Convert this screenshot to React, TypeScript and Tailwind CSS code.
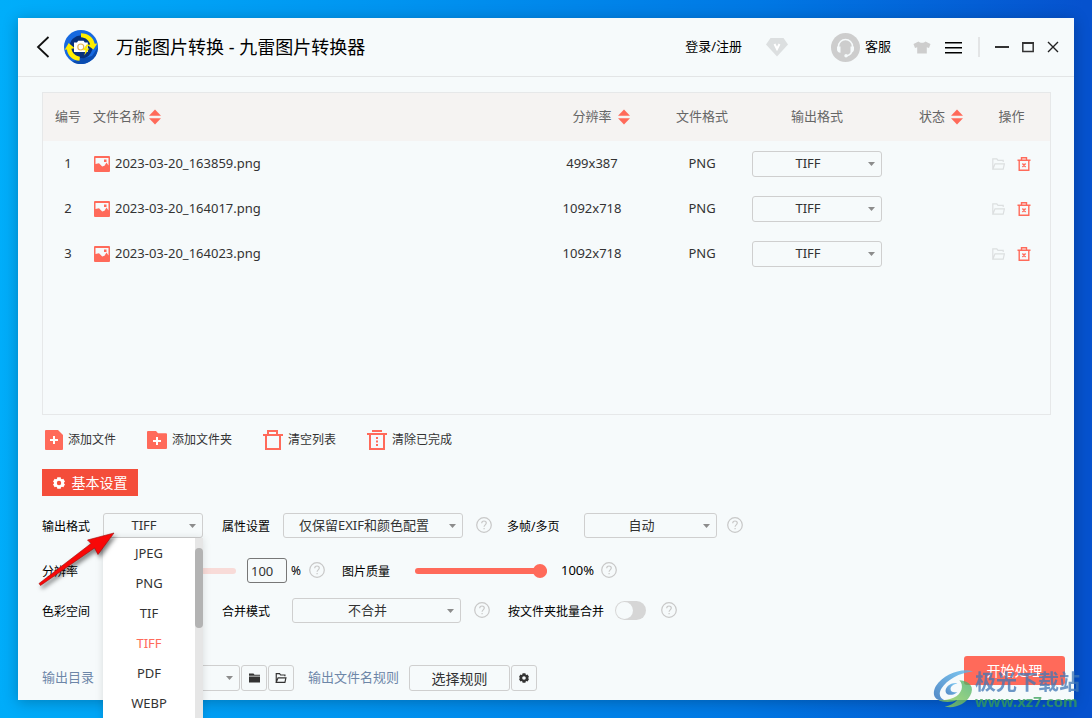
import React, { useState } from 'react';

const FORMATS = ['JPEG', 'PNG', 'TIF', 'TIFF', 'PDF', 'WEBP'];

const initialFiles = [
    { id: 1, name: '2023-03-20_163859.png', size: '499x387', type: 'PNG', target: 'TIFF' },
    { id: 2, name: '2023-03-20_164017.png', size: '1092x718', type: 'PNG', target: 'TIFF' },
    { id: 3, name: '2023-03-20_164023.png', size: '1092x718', type: 'PNG', target: 'TIFF' },
];

const Sorter = () => (
    <svg width="12" height="16" viewBox="0 0 12 16" fill="#ff6a5a" aria-hidden="true">
        <path d="M6 0.5 12 6.8H0z" />
        <path d="M6 15.5 0 9.2h12z" />
    </svg>
);

const Logo = () => (
    <svg width="34" height="34" viewBox="0 0 34 34" aria-hidden="true">
        <circle cx="17" cy="17" r="17" fill="#1769e0" />
        <path d="M34 17a17 17 0 0 1-26 14.4L28 26z" fill="#0b4cb0" />
        <circle cx="17" cy="17" r="11.5" fill="#07307c" />
        <path d="M17 3.2c7.300 0 12.600 4.500 13.700 10.600l2.600-.4-3.900 6.200-6.200-4.600 3-.5C25 10.500 21.700 7.600 17 7.300z" fill="#ffee00" />
        <path d="M15.500 30.800C8.600 30.500 3.600 25.800 2.900 19.600l-2.200.2 4-6.900 6 5.300-3.300.6c.8 4.200 4 7.300 8.500 7.900z" fill="#ffee00" />
        <path d="M10 12.500h3l1.200-1.700h5.400l1.200 1.700h3V22H10z" fill="#fff" />
        <circle cx="16.800" cy="17" r="3" fill="#fff" stroke="#e3b45b" strokeWidth="1.200" />
        <path d="m22.500 14.500-3.600 5.800h2.600l-1.200 5.200 5-7h-2.600l1.800-4z" fill="#ffee00" />
    </svg>
);

const ImageIcon = () => (
    <svg width="16" height="16" viewBox="0 0 16 16" aria-hidden="true">
        <rect width="16" height="16" rx="1" fill="#ff6a5a" />
        <path d="M1.500 2h13V9.500L12.500 6.500 10.500 9.800 8.200 10.500 5 7.200 1.500 8z" fill="#f6fafb" />
        <rect x="10" y="3.500" width="2.500" height="2.500" fill="#ff6a5a" />
    </svg>
);

const OpenFolder = () => (
    <svg width="13" height="12" viewBox="0 0 13 12" fill="none" stroke="currentColor" strokeWidth="1.200" aria-hidden="true">
        <path d="M11.200 4V2.400H6L4.800.8H.8v10.400M.8 11.200 3 5.800h9.400l-1.200 5.400z" />
    </svg>
);

const DeleteIcon = () => (
    <svg width="14" height="14" viewBox="0 0 14 14" fill="none" stroke="#ff6a5a" strokeWidth="1.400" aria-hidden="true">
        <path d="M.5 3.300h13M4.500 3V.8h5V3M2.200 3.500v9.800h9.600V3.500M5.400 6.500l3.200 3.400M8.600 6.500 5.400 9.900" />
    </svg>
);

const GearIcon = ({ size, hole }: { size: number; hole: string }) => (
    <svg width={size} height={size} viewBox="0 0 12 12" aria-hidden="true">
        <path
            d="M4.300.3h3.400l.3 1.400 1 .6 1.400-.5L12 4.700l-1 .9v.8l1 .9-1.600 2.900-1.400-.5-1 .6-.3 1.400H4.300L4 10.300l-1-.6-1.400.5L0 7.300l1-.9v-.8l-1-.9 1.600-2.900 1.400.5 1-.6z"
            fill="currentColor"
        />
        <circle cx="6" cy="6" r="2.200" fill={hole} />
    </svg>
);

const HelpIcon = () => (
    <button type="button" aria-label="帮助" className="mb-px shrink-0 text-[#c8c8c8]">
        <svg width="16" height="16" viewBox="0 0 16 16" fill="none" stroke="currentColor" strokeWidth="1.200">
            <circle cx="8" cy="8" r="7.300" />
            <path d="M5.700 6.300C5.700 4.800 6.700 4 8 4s2.300.9 2.300 2.100c0 1.700-2.200 1.800-2.200 3.600M8.100 11v1.200" />
        </svg>
    </button>
);

interface SelectBoxProps {
    id?: string;
    label?: string;
    value: string;
    options: string[];
    className: string;
    onChange?: (value: string) => void;
}

const SelectBox: React.FC<SelectBoxProps> = ({ id, label, value, options, className, onChange }) => (
    <div className={`relative shrink-0 ${className}`}>
        <select
            id={id}
            aria-label={label}
            value={value}
            onChange={e => onChange?.(e.target.value)}
            className="block h-full w-full appearance-none rounded-[3px] border border-[#cfcfcf] bg-transparent pr-[18px] text-center text-[13px] text-[#333]"
        >
            {options.map(option => <option key={option}>{option}</option>)}
        </select>
        <svg width="7" height="4" viewBox="0 0 7 4" fill="#8c8c8c" className="pointer-events-none absolute right-[7px] top-1/2 -translate-y-1/2">
            <path d="M0 0h7L3.500 4z" />
        </svg>
    </div>
);

const TitleBar = () => (
    <header className="flex h-[59px] shrink-0 items-center border-b border-[#e3e5e6] pl-[18px] pr-[15px]">
        <button type="button" aria-label="返回">
            <svg width="14" height="22" viewBox="0 0 14 22" fill="none" stroke="#111" strokeWidth="1.800">
                <path d="M12.500 1 2 11l10.500 10" />
            </svg>
        </button>
        <div className="ml-[14px]"><Logo /></div>
        <h1 className="ml-[18px] text-[18px] text-black">万能图片转换 - 九雷图片转换器</h1>

        <div className="ml-auto flex items-center text-[13px] text-black">
            <a href="#login">登录/注册</a>
            <svg width="22" height="20" viewBox="0 0 22 20" className="ml-6" aria-hidden="true">
                <path d="M4.500 1h13L22 7.500 11 19.500 0 7.500z" fill="#dcdfe0" />
                <path d="m8.500 7 2.500 5 2.500-5" fill="none" stroke="#fff" strokeWidth="2" />
            </svg>
            <button type="button" className="ml-[43px] flex items-center gap-[5px]">
                <svg width="29" height="29" viewBox="0 0 29 29" aria-hidden="true">
                    <circle cx="14.500" cy="14.500" r="14.500" fill="#cdcdcd" />
                    <path d="M7.500 15v-1.500a7 7 0 0 1 14 0V15c0 4-2.500 7-6 8" fill="none" stroke="#f6fafb" strokeWidth="1.500" />
                    <path d="M6 13.500h3.500v6.300C7.300 19.800 6 18.300 6 16.500zM23 13.500h-3.500v6.300c2.200 0 3.500-1.500 3.500-3.300z" fill="#f6fafb" />
                    <circle cx="15" cy="22.700" r="1.700" fill="#f6fafb" />
                </svg>
                客服
            </button>
            <button type="button" aria-label="换肤" className="ml-[22px]">
                <svg width="18" height="13" viewBox="0 0 18 13" fill="#cdcdcd">
                    <path d="M5.500.5C7 2.200 11 2.200 12.500.5L17.500 3 16 7l-2.200-.8V12.500H4.200V6.200L2 7 .5 3z" />
                </svg>
            </button>
            <button type="button" aria-label="菜单" className="ml-[14px]">
                <svg width="17" height="13" viewBox="0 0 17 13" fill="#000">
                    <path d="M0 1h17v1.500H0zM0 6h17v1.500H0zM0 11h17v1.500H0z" />
                </svg>
            </button>
            <span className="ml-4 h-5 w-0.5 bg-[#e3e5e6]" />
            <button type="button" aria-label="最小化" className="ml-[15px]">
                <svg width="14" height="12" viewBox="0 0 14 12"><path d="M0 5h14v2H0z" fill="#333" /></svg>
            </button>
            <button type="button" aria-label="最大化" className="ml-[13px]">
                <svg width="12" height="12" viewBox="0 0 12 12" fill="none" stroke="#333" strokeWidth="1.500">
                    <path d="M.8 2.200h10.400v8.300H.8z" />
                    <path d="M0 2h12" strokeWidth="2" />
                </svg>
            </button>
            <button type="button" aria-label="关闭" className="ml-[13px]">
                <svg width="12" height="12" viewBox="0 0 12 12" stroke="#222" strokeWidth="1.400"><path d="m1 1 10 10M11 1 1 11" /></svg>
            </button>
        </div>
    </header>
);

const FileTable = () => {
    const [files, setFiles] = useState(initialFiles);

    const changeTarget = (id: number, target: string) => {
        setFiles(files.map(f => (f.id === id ? { ...f, target } : f)));
    };

    return (
        <div className="min-h-0 flex-1 border border-[#e6e8e9]">
            <table className="w-full table-fixed text-center text-[13px] text-[#333]">
                <thead className="bg-[#f5f3f2] text-[#666]">
                    <tr className="h-12">
                        <th className="w-[50px] font-normal">编号</th>
                        <th className="text-left font-normal">
                            <span className="flex items-center gap-1">文件名称<Sorter /></span>
                        </th>
                        <th className="w-[110px] font-normal">
                            <span className="flex items-center justify-center">分辨率<span className="-mr-[18px] ml-1.5"><Sorter /></span></span>
                        </th>
                        <th className="w-[110px] font-normal">文件格式</th>
                        <th className="w-[120px] font-normal">输出格式</th>
                        <th className="w-[110px] font-normal">
                            <span className="flex items-center justify-center">状态<span className="-mr-[18px] ml-1.5"><Sorter /></span></span>
                        </th>
                        <th className="w-[63px] pr-[14px] font-normal">操作</th>
                    </tr>
                </thead>
                <tbody>
                    {files.map(file => (
                        <tr key={file.id} className="h-[45px]">
                            <td>{file.id}</td>
                            <td>
                                <span className="flex items-center gap-[5px] pl-px"><ImageIcon />{file.name}</span>
                            </td>
                            <td>{file.size}</td>
                            <td>{file.type}</td>
                            <td>
                                <SelectBox
                                    label={`${file.name} 输出格式`}
                                    value={file.target}
                                    options={FORMATS}
                                    onChange={value => changeTarget(file.id, value)}
                                    className="-mx-[5px] h-[26px]"
                                />
                            </td>
                            <td></td>
                            <td className="pr-[14px]">
                                <span className="flex items-center justify-center gap-3">
                                    <button type="button" aria-label="打开" className="text-[#dcdfe0]"><OpenFolder /></button>
                                    <button type="button" aria-label="删除" onClick={() => setFiles(files.filter(f => f.id !== file.id))}>
                                        <DeleteIcon />
                                    </button>
                                </span>
                            </td>
                        </tr>
                    ))}
                </tbody>
            </table>
        </div>
    );
};

const Toolbar = () => (
    <div className="flex shrink-0 items-center pl-[3px] text-[12px] text-[#333]">
        <button type="button" className="flex items-center gap-[5px]">
            <svg width="18" height="20" viewBox="0 0 18 20" aria-hidden="true">
                <path d="M1 0h12l5 5v14a1 1 0 0 1-1 1H1a1 1 0 0 1-1-1V1a1 1 0 0 1 1-1z" fill="#ff6a5a" />
                <path d="M9 6v8M5 10h8" stroke="#fff" strokeWidth="2" />
            </svg>
            添加文件
        </button>
        <button type="button" className="ml-[31px] flex items-center gap-[5px]">
            <svg width="20" height="20" viewBox="0 0 20 20" aria-hidden="true">
                <path d="M1 1h8l2 2.200h8a1 1 0 0 1 1 1V18a1 1 0 0 1-1 1H1a1 1 0 0 1-1-1V2a1 1 0 0 1 1-1z" fill="#ff6a5a" />
                <path d="M10 7v8M6 11h8" stroke="#fff" strokeWidth="2" />
            </svg>
            添加文件夹
        </button>
        <button type="button" className="ml-[31px] flex items-center gap-[5px]">
            <svg width="20" height="20" viewBox="0 0 20 20" fill="none" stroke="#ff6a5a" strokeWidth="2" aria-hidden="true">
                <path d="M0 5h20M5 4.500V1h9v3.500M3 5v14h14V5" />
            </svg>
            清空列表
        </button>
        <button type="button" className="ml-[31px] flex items-center gap-[5px]">
            <svg width="20" height="20" viewBox="0 0 20 20" fill="none" stroke="#ff6a5a" strokeWidth="2" aria-hidden="true">
                <path d="M0 4h20M5 1h10M3 4v15h14V4" />
                <path d="M10 7v9" strokeDasharray="2 1.500" />
            </svg>
            清除已完成
        </button>
    </div>
);

const FormatMenu = ({ value, onPick }: { value: string; onPick: (value: string) => void }) => (
    <div className="absolute left-0 top-full z-10 flex h-[190px] w-full overflow-hidden bg-white shadow-[0_0_8px_rgba(0,0,0,0.12)]">
        <ul className="flex-1 pt-px text-[13px]">
            {FORMATS.map(format => (
                <li key={format}>
                    <button
                        type="button"
                        onClick={() => onPick(format)}
                        className={format === value ? 'h-[30px] w-full text-[#ff6a5a]' : 'h-[30px] w-full text-[#333]'}
                    >
                        {format}
                    </button>
                </li>
            ))}
        </ul>
        <div className="w-2 bg-[#e6e6e6] pt-2.5">
            <div className="h-20 rounded-full bg-[#b3b3b3]" />
        </div>
    </div>
);

const Settings = () => {
    const [format, setFormat] = useState('TIFF');
    const [dpi, setDpi] = useState('100');
    const [quality, setQuality] = useState(100);
    const [batch, setBatch] = useState(false);

    return (
        <form className="flex shrink-0 flex-col text-[12px] text-black" onSubmit={e => e.preventDefault()}>
            <div className="flex h-[25px] items-center">
                <label htmlFor="format" className="w-[61px] pt-0.5">输出格式</label>
                <div className="relative">
                    <SelectBox id="format" value={format} options={FORMATS} onChange={setFormat} className="h-[25px] w-[100px]" />
                    <FormatMenu value={format} onPick={setFormat} />
                </div>
                <label htmlFor="attrs" className="ml-[19px] w-[61px] pt-0.5">属性设置</label>
                <SelectBox id="attrs" value="仅保留EXIF和颜色配置" options={['仅保留EXIF和颜色配置']} className="mr-[13px] h-[25px] w-[180px]" />
                <HelpIcon />
                <label htmlFor="frames" className="ml-[15px] w-[77px] pt-0.5">多帧/多页</label>
                <SelectBox id="frames" value="自动" options={['自动']} className="mr-[10px] h-[25px] w-[133px]" />
                <HelpIcon />
            </div>

            <div className="mt-5 flex h-[25px] items-center">
                <label htmlFor="dpi" className="w-[61px] pt-0.5">分辨率</label>
                <span className="h-1.5 w-[133px] rounded-full bg-[#f8dbd8]" />
                <input
                    id="dpi"
                    value={dpi}
                    onChange={e => setDpi(e.target.value)}
                    className="ml-[11px] h-[25px] w-10 rounded-[3px] border border-[#777] pl-[3px] text-[13px] text-[#333]"
                />
                <span className="ml-1 mr-2">%</span>
                <HelpIcon />
                <label htmlFor="quality" className="ml-[17px] w-[73px] pt-0.5">图片质量</label>
                <input
                    id="quality"
                    type="range"
                    value={quality}
                    onChange={e => setQuality(Number(e.target.value))}
                    className="h-1.5 w-[132px] appearance-none rounded-full bg-[#ff6a5a] [&::-webkit-slider-thumb]:size-3.5 [&::-webkit-slider-thumb]:appearance-none [&::-webkit-slider-thumb]:rounded-full [&::-webkit-slider-thumb]:bg-[#ff6a5a]"
                />
                <span className="ml-[14px] mr-[7px] text-[13px]">{quality}%</span>
                <HelpIcon />
            </div>

            <div className="mt-[15px] flex h-[25px] items-center">
                <span className="w-[180px] pt-0.5">色彩空间</span>
                <label htmlFor="merge" className="w-[70px] pt-0.5">合并模式</label>
                <SelectBox id="merge" value="不合并" options={['不合并']} className="mr-[13px] h-[25px] w-[169px]" />
                <HelpIcon />
                <label htmlFor="batch" className="ml-[18px] w-[107px] pt-0.5">按文件夹批量合并</label>
                <input
                    id="batch"
                    type="checkbox"
                    checked={batch}
                    onChange={e => setBatch(e.target.checked)}
                    className="mr-[15px] h-[19px] w-[31px] appearance-none rounded-full bg-[#d6d6d6] p-px before:block before:size-[17px] before:rounded-full before:bg-[#f6fafb] checked:bg-[#ff6a5a] checked:before:ml-3"
                />
                <HelpIcon />
            </div>
        </form>
    );
};

const OutputBar = () => (
    <footer className="-mr-[14px] mt-[33px] flex h-[44px] shrink-0 items-start text-[13px]">
        <div className="mt-[9px] flex items-center">
            <label htmlFor="outdir" className="w-[61px] text-[#6d86a8]">输出目录</label>
            <SelectBox id="outdir" value="" options={['']} className="h-[26px] w-[137px]" />
            <button type="button" aria-label="选择目录" className="ml-px flex size-[26px] items-center justify-center rounded-[3px] border border-[#cfcfcf]">
                <svg width="11" height="10" viewBox="0 0 11 10" fill="#333"><path d="M0 .5h4.500l1 1.300H11v1H0zM0 3.500h11v6H0z" /></svg>
            </button>
            <button type="button" aria-label="打开目录" className="ml-px flex size-[26px] items-center justify-center rounded-[3px] border border-[#cfcfcf] text-[#333]">
                <svg width="12" height="10" viewBox="0 0 13 12" fill="none" stroke="currentColor" strokeWidth="1.400">
                    <path d="M11.200 4V2.400H6L4.800.8H.8v10.400M.8 11.200 3 5.800h9.400l-1.200 5.400z" />
                </svg>
            </button>
            <span className="ml-[14px] w-[101px] text-[#6d86a8]">输出文件名规则</span>
            <button type="button" className="h-[26px] w-[101px] rounded-[3px] border border-[#cfcfcf] text-[14px] text-[#333]">选择规则</button>
            <button type="button" aria-label="规则设置" className="ml-px flex size-[26px] items-center justify-center rounded-[3px] border border-[#cfcfcf] text-[#333]">
                <GearIcon size={10} hole="#f6fafb" />
            </button>
        </div>
        <button type="button" className="ml-auto h-[29px] w-[101px] rounded-[3px] bg-[#ff6a5a] text-[14px] text-white">开始处理</button>
    </footer>
);

// Red pointer laid over the format selector
const Pointer = () => (
    <svg width="90" height="68" viewBox="0 0 90 68" className="pointer-events-none absolute left-[36px] top-[528px] z-20 drop-shadow-[2px_3px_2px_rgba(0,0,0,0.5)]" aria-hidden="true">
        <path d="M3 55.500 55 15.500 51.500 12 78 5 62 26.500 58.500 20 4.500 57.500z" fill="#f80808" stroke="#a00808" strokeWidth="0.600" />
    </svg>
);

const Watermark = () => (
    <div className="pointer-events-none absolute bottom-[8px] right-[12px] z-20 flex items-center font-bold opacity-75">
        <svg width="43" height="42" viewBox="0 0 44 42" aria-hidden="true">
            <defs>
                <linearGradient id="swirl-blue" x1="1" y1="0" x2="0" y2="1">
                    <stop offset="0" stopColor="#5bbdf2" />
                    <stop offset="1" stopColor="#1c63b4" />
                </linearGradient>
                <linearGradient id="swirl-green" x1="1" y1="0" x2="0" y2="1">
                    <stop offset="0" stopColor="#3fae6a" />
                    <stop offset="1" stopColor="#a5d64a" />
                </linearGradient>
            </defs>
            <path d="M42 3C30-1 12 6 4 18c-5 9-1 16 10 15-6-2-8-7-4-13C15 12 28 4 42 3z" fill="url(#swirl-blue)" />
            <path d="M26 15c-7-1-13 4-12 9 1 4 8 4 12 0-4 1-7 0-7-3s3-5 7-6z" fill="url(#swirl-blue)" />
            <path d="M28 12c5 5 3 14-6 18-5 2-11 3-16 2 6 3 14 3 20 0-3 4-8 6-13 7 10 3 22-3 26-11 5-9 0-15-11-16z" fill="url(#swirl-green)" />
        </svg>
        <div className="whitespace-nowrap">
            <div className="text-[21px] leading-6 text-[#3f77b5]">极光下载站</div>
            <div className="text-[15px] leading-4 text-[#35a055]">www.xz7.com</div>
        </div>
    </div>
);

export default function App() {
    return (
        <div className="relative flex h-screen overflow-hidden bg-[linear-gradient(92deg,#00aefa_0%,#0094f0_35%,#0078e4_68%,#0652ce_97%)] p-[18px] font-['Noto_Sans','Noto_Sans_CJK_SC',sans-serif]">
            <main className="flex min-w-0 flex-1 flex-col bg-[#f6fafb] shadow-[0_2px_14px_rgba(0,0,0,0.25)]">
                <TitleBar />
                <section className="flex min-h-0 flex-1 flex-col pl-6 pr-[23px] pt-[15px]">
                    <FileTable />
                    <div className="mt-[15px] shrink-0"><Toolbar /></div>
                    <button type="button" className="mb-[17px] mt-[19px] flex h-[27px] w-24 shrink-0 items-center justify-center gap-[7px] bg-[#f44d3a] text-[14px] text-white">
                        <GearIcon size={12} hole="#f44d3a" />
                        基本设置
                    </button>
                    <Settings />
                    <OutputBar />
                </section>
            </main>
            <Pointer />
            <Watermark />
        </div>
    );
}
